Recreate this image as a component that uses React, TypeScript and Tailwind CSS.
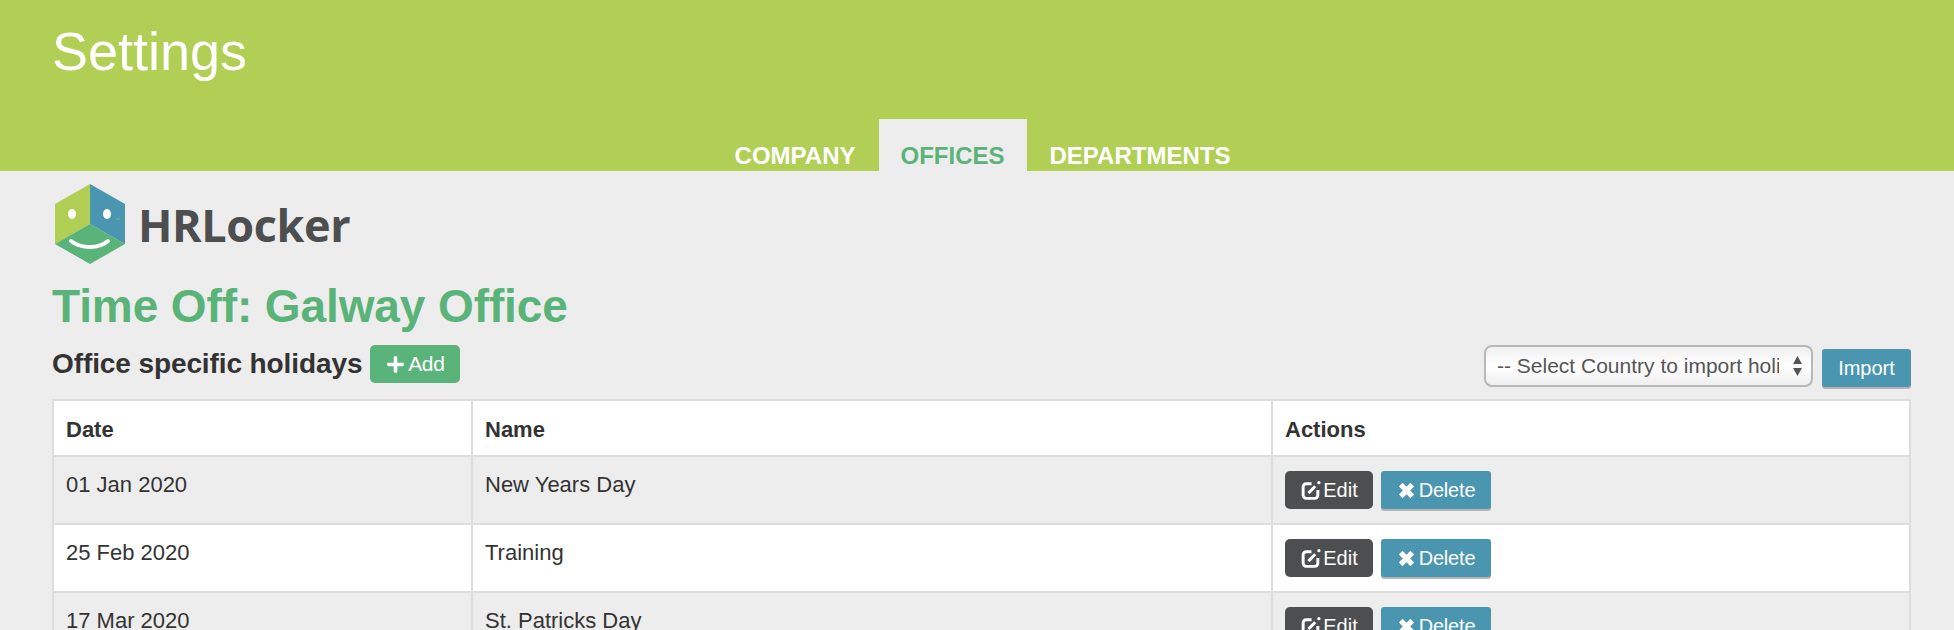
import React from 'react';
import { FaPlus } from 'react-icons/fa';

const rows = [
  { date: '01 Jan 2020', name: 'New Years Day', bg: 'bg-[#ededed]' },
  { date: '25 Feb 2020', name: 'Training', bg: 'bg-white' },
  { date: '17 Mar 2020', name: 'St. Patricks Day', bg: 'bg-[#ededed]' },
];

const EditIcon = () => (
  <svg width="21" height="21" viewBox="0 0 20 20" fill="none">
    <path d="M11 3.5H6a3 3 0 0 0-3 3v8a3 3 0 0 0 3 3h8a3 3 0 0 0 3-3v-5" stroke="#fff" strokeWidth="2.8" />
    <path d="M8 12.5L14.5 6" stroke="#fff" strokeWidth="2.8" />
    <circle cx="18" cy="2.5" r="1.6" fill="#fff" />
  </svg>
);

const RemoveIcon = () => (
  <svg width="19" height="19" viewBox="0 0 18 18" fill="none">
    <path d="M3.5 3.5 L14.5 14.5 M14.5 3.5 L3.5 14.5" stroke="#fff" strokeWidth="5" />
  </svg>
);

const Logo = () => (
  <div className="flex items-center h-[80px] gap-[13px] pl-[3px]">
    <svg width="70" height="80" viewBox="0 0 70 80">
      <polygon points="35,0 35,40 0,60 0,20" fill="#b2cf55" />
      <polygon points="35,0 70,20 70,60 35,40" fill="#4a96b0" />
      <polygon points="35,40 70,60 35,80 0,60" fill="#5ab378" />
      <ellipse cx="17" cy="30" rx="4" ry="5" fill="#fff" />
      <ellipse cx="52" cy="30" rx="4" ry="5" fill="#fff" />
      <ellipse cx="63" cy="35" rx="2" ry="1" fill="#5ab378" />
      <path d="M16 57 C26 65 44 65 53 57" fill="none" stroke="#fff" strokeWidth="4" strokeLinecap="round" />
    </svg>
    <span className="font-['Open_Sans',sans-serif] font-bold text-[45px] leading-none tracking-[-0.4px] text-[#4d4e50]">
      HRLocker
    </span>
  </div>
);

const ActionButtons = () => (
  <div className="flex items-start gap-2">
    <button className="flex items-center gap-[2px] h-[38px] w-[88px] justify-center rounded-[5px] bg-[#4d4e50] text-white text-[20px]">
      <EditIcon />
      Edit
    </button>
    <button className="flex items-center gap-[3px] h-[38px] w-[110px] justify-center rounded-[3px] bg-[#4a96b0] text-white text-[20px] tracking-[-0.2px] shadow-[0_2px_0_#b5b5b5]">
      <RemoveIcon />
      Delete
    </button>
  </div>
);

const App = () => {
  return (
    <div className="h-[630px] overflow-hidden bg-[#ededed] font-['Liberation_Sans',Arial,sans-serif] text-[#333]">
      <header className="h-[171px] bg-[#b2cf55] flex flex-col justify-between">
        <h1 className="pl-[52px] pt-[20px] text-[54px] leading-[62px] text-white">Settings</h1>
        <nav className="flex justify-center pl-[11px] text-[24px] leading-[20px] font-bold uppercase text-white">
          <a className="h-[52px] px-[23px] flex items-end pb-[5px]">Company</a>
          <a className="h-[52px] w-[148px] justify-center flex items-end pb-[5px] bg-[#ededed] text-[#5ab378]">Offices</a>
          <a className="h-[52px] px-[23px] flex items-end pb-[5px]">Departments</a>
        </nav>
      </header>
      <main className="px-[43px] pl-[52px]">
        <div className="pt-[13px]">
          <Logo />
        </div>
        <h2 className="mt-[18px] text-[46px] leading-[48px] tracking-[-0.1px] font-bold text-[#5ab378]">Time Off: Galway Office</h2>
        <div className="mt-[15px] flex items-start justify-between h-[54px]">
          <div className="flex items-center gap-2 h-[38px]">
            <span className="text-[28px] tracking-[-0.1px] font-bold">Office specific holidays</span>
            <button className="flex items-center justify-center gap-[3px] h-[38px] w-[90px] rounded-[5px] bg-[#5ab378] text-white text-[21px] tracking-[-0.3px]">
              <FaPlus size={19} />
              Add
            </button>
          </div>
          <div className="flex items-start gap-[9px]">
            <div className="relative">
              <select className="appearance-none w-[329px] h-[42px] pl-[11px] pr-[32px] rounded-[8px] border-2 border-[#b8b8b8] bg-gradient-to-b from-[#f0f0f0] via-white to-[#efefef] text-[21px] text-[#555] outline-none">
                <option>-- Select Country to import holidays</option>
              </select>
              <svg className="absolute right-[10px] top-[11px]" width="11" height="20" viewBox="0 0 11 20">
                <path d="M5.5 0 L10 8 H1 Z M1 12 H10 L5.5 20 Z" fill="#555" />
              </svg>
            </div>
            <button className="mt-[4px] h-[38px] w-[89px] rounded-[3px] bg-[#4a96b0] text-white text-[20px] shadow-[0_2px_0_#b5b5b5]">
              Import
            </button>
          </div>
        </div>
        <table className="w-[1859px] table-fixed border-collapse border-2 border-[#ddd] text-[22px]">
          <colgroup>
            <col className="w-[419px]" />
            <col className="w-[800px]" />
            <col />
          </colgroup>
          <thead>
            <tr className="h-[56px] bg-white">
              <th className="border-2 border-[#ddd] px-[12px] pt-[2px] text-left font-bold">Date</th>
              <th className="border-2 border-[#ddd] px-[12px] pt-[2px] text-left font-bold">Name</th>
              <th className="border-2 border-[#ddd] px-[12px] pt-[2px] text-left font-bold">Actions</th>
            </tr>
          </thead>
          <tbody>
            {rows.map((row) => (
              <tr key={row.date} className={`h-[68px] ${row.bg}`}>
                <td className="border-2 border-[#ddd] px-[12px] pt-[14px] pb-[10px] align-top leading-[28px]">{row.date}</td>
                <td className="border-2 border-[#ddd] px-[12px] pt-[14px] pb-[10px] align-top leading-[28px]">{row.name}</td>
                <td className="border-2 border-[#ddd] px-[12px] pt-[14px] pb-[12px] align-top">
                  <ActionButtons />
                </td>
              </tr>
            ))}
          </tbody>
        </table>
      </main>
    </div>
  );
};

export default App;
